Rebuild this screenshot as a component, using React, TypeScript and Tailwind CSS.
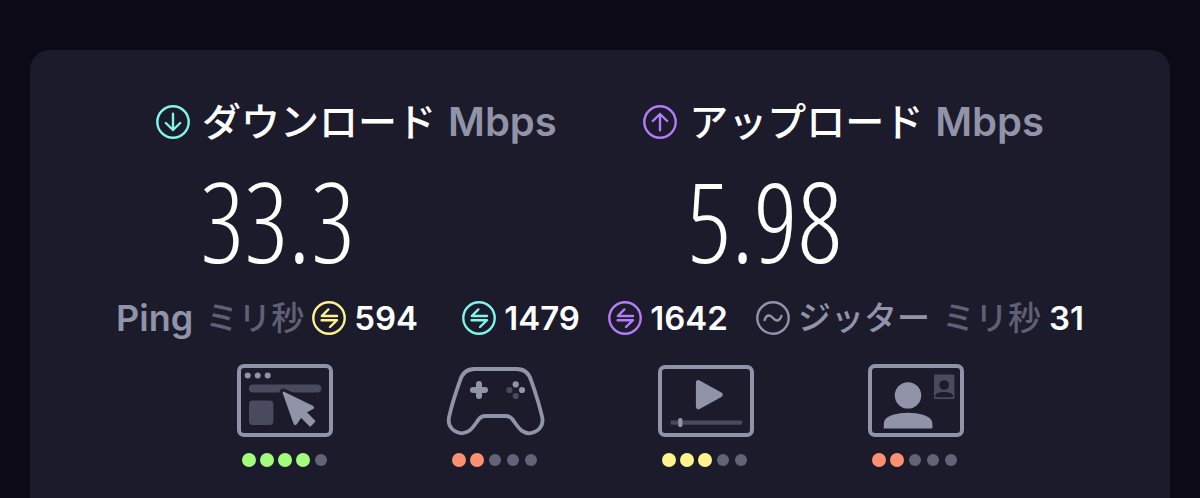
import { ReactNode } from "react";

const circleColors = {
  teal: "text-[#80f5ea]",
  purple: "text-[#b57cfa]",
  yellow: "text-[#fff38e]",
  gray: "text-[#9193a8]",
};

type CircleColor = keyof typeof circleColors;

function CircleIcon({ color, children }: { color: CircleColor; children: ReactNode }) {
  return (
    <svg
      viewBox="0 0 34 34"
      fill="none"
      stroke="currentColor"
      strokeWidth="2.4"
      strokeLinecap="round"
      strokeLinejoin="round"
      aria-hidden="true"
      className={`size-[34px] shrink-0 ${circleColors[color]}`}>
      <circle cx="17" cy="17" r="15.7" />
      {children}
    </svg>
  );
}

const swapPath = <path d="M16.4 8.4 L9.8 15 H25 M9.6 19.2 H25 L18 26" />;

function Speed({
  label,
  value,
  color,
  arrow,
}: {
  label: string;
  value: string;
  color: CircleColor;
  arrow: string;
}) {
  return (
    <section>
      <h2 className="flex items-center text-[39px] leading-10 font-medium text-white">
        <CircleIcon color={color}>
          <path d={arrow} />
        </CircleIcon>
        <span className="ml-3">{label}</span>
        <span className="ml-3 text-[40px] font-semibold text-[#9193a8]">Mbps</span>
      </h2>
      <p className="ml-11 mt-4 font-['Open_Sans_Condensed_Light','Roboto_Condensed','Roboto',sans-serif] text-[110px] leading-[124px] font-thin text-white">
        {value}
      </p>
    </section>
  );
}

function Ping({ value, color }: { value: string; color: CircleColor }) {
  return (
    <span className="flex items-center gap-2">
      <CircleIcon color={color}>{swapPath}</CircleIcon>
      <span className="font-semibold text-white">{value}</span>
    </span>
  );
}

function Art({ label, children }: { label: string; children: ReactNode }) {
  return (
    <svg viewBox="0 0 100 77" role="img" aria-label={label} className="h-[77px] w-[100px]">
      {children}
    </svg>
  );
}

const main = "#9193a8";
const dim = "#494a5d";
const card = "#1b1b2c";

function BrowserArt() {
  return (
    <Art label="Web">
      <rect x="4" y="4" width="92" height="69" rx="5" fill="none" stroke={main} strokeWidth="4" />
      <circle cx="12.7" cy="13.6" r="3" fill={main} />
      <circle cx="22.7" cy="13.6" r="3" fill={main} />
      <circle cx="32.7" cy="13.6" r="3" fill={main} />
      <rect x="14" y="22.4" width="72.4" height="8.2" rx="4" fill={dim} />
      <rect x="14" y="38.6" width="24.4" height="24.4" rx="4" fill={dim} />
      <path
        d="M48.6 30.6 L78 45 L69.8 49.6 L79.3 59.2 L75.2 63.6 L65.8 54 L60.2 62 Z"
        fill={card}
        stroke={card}
        strokeWidth="8"
        strokeLinejoin="round"
      />
      <path
        d="M48.6 30.6 L77.4 44.6 Q78.6 45.6 77.2 46.4 L70.2 50 L79.3 59.2 L75.2 63.6 L66 54.2 L61.2 61.4 Q60.2 62.6 59.4 61.2 Z"
        fill={main}
        stroke={main}
        strokeWidth="2"
        strokeLinejoin="round"
      />
    </Art>
  );
}

function GamepadArt() {
  return (
    <Art label="Gaming">
      <path
        d="M29.6 7 H71.6 C79.6 7 84 11.2 86.2 18.6 C90.6 31 94.2 42 97 54.4 C100 67 87 75.4 77 68.8 C73.2 66.2 70.6 61.4 67.2 57 C65.4 54.8 63.6 54 61 54 H40.2 C37.6 54 35.8 54.8 34 57 C30.6 61.4 28 66.2 24.2 68.8 C14.2 75.4 1.2 67 4.2 54.4 C7 42 10.6 31 15 18.6 C17.2 11.2 21.6 7 29.6 7 Z"
        fill="none"
        stroke={main}
        strokeWidth="3.8"
        strokeLinejoin="round"
      />
      <path d="M34 22 V34 M28 28 H40" stroke={main} strokeWidth="6" strokeLinecap="round" />
      <circle cx="70.7" cy="22.4" r="3.1" fill={main} />
      <circle cx="77" cy="28" r="3.1" fill={main} />
      <circle cx="64.4" cy="28" r="3.1" fill={dim} />
      <circle cx="70.7" cy="34" r="3.1" fill={dim} />
    </Art>
  );
}

function VideoArt() {
  return (
    <Art label="Video">
      <rect x="5" y="5" width="92" height="68" rx="5" fill="none" stroke={main} strokeWidth="4" />
      <path
        d="M43.4 20.6 L65.2 32.7 L43.4 44.8 Z"
        fill={main}
        stroke={main}
        strokeWidth="5"
        strokeLinejoin="round"
      />
      <rect x="15.6" y="58.6" width="71.4" height="4.2" rx="1" fill={dim} />
      <rect x="23.2" y="56" width="4.2" height="9" rx="1.6" fill={main} />
    </Art>
  );
}

function CallArt() {
  return (
    <Art label="Video call">
      <rect x="5" y="4" width="92" height="69" rx="5" fill="none" stroke={main} strokeWidth="4" />
      <circle cx="43" cy="33.4" r="13.2" fill={main} />
      <path
        d="M18.8 66.4 V62 C18.8 57 23 54.4 28 52.8 C37 50 49 50 58 52.8 C63 54.4 67.4 57 67.4 62 V66.4 Z"
        fill={main}
      />
      <rect x="69" y="12.4" width="20.4" height="24.6" rx="1" fill={dim} />
      <circle cx="79.2" cy="23" r="4.8" fill={card} />
      <path d="M70.4 35.2 V33.4 C71.4 31 75 30 79.2 30 C83.4 30 87 31 88 33.4 V35.2 Z" fill={card} />
    </Art>
  );
}

const ratings = [
  { name: "web", art: <BrowserArt />, score: 4, on: "bg-[#a3fb7c]" },
  { name: "gaming", art: <GamepadArt />, score: 2, on: "bg-[#fb9070]" },
  { name: "video", art: <VideoArt />, score: 3, on: "bg-[#fff38e]" },
  { name: "call", art: <CallArt />, score: 2, on: "bg-[#fb9070]" },
];

function Dots({ score, on }: { score: number; on: string }) {
  return (
    <div className="flex">
      {[0, 1, 2, 3, 4].map(i => (
        <span key={i} className="flex size-[18px] items-center justify-center">
          <span className={`rounded-full ${i < score ? `size-3.5 ${on}` : "size-3 bg-[#626377]"}`} />
        </span>
      ))}
    </div>
  );
}

export default function App() {
  return (
    <main
      lang="ja"
      className="flex min-h-screen flex-col bg-[#0b0a16] px-[30px] pt-[50px] font-['Inter','Noto_Sans_CJK_JP',sans-serif]">
      <div className="flex-1 rounded-t-[20px] bg-[#1b1b2c] pt-[52px]">
        <div className="flex justify-between px-[126px]">
          <Speed
            label="ダウンロード"
            value="33.3"
            color="teal"
            arrow="M17 8.8 V25 M9.8 18 L17 25 L24.2 18"
          />
          <Speed
            label="アップロード"
            value="5.98"
            color="purple"
            arrow="M17 25.2 V9 M9.8 16 L17 9 L24.2 16"
          />
        </div>

        <div className="mt-4 flex items-center justify-between px-[86px] text-[33px] leading-10 font-medium">
          <div className="mr-4 flex items-center gap-2">
            <span className="mr-1 text-[36px] font-semibold text-[#9193a8]">Ping</span>
            <span className="text-[#5f6074]">ミリ秒</span>
            <Ping value="594" color="yellow" />
          </div>
          <Ping value="1479" color="teal" />
          <Ping value="1642" color="purple" />
          <div className="flex items-center gap-2">
            <CircleIcon color="gray">
              <path d="M8.6 19 C10.4 13.4 14 13.4 17 17 C20 20.6 23.6 20.6 25.4 15" />
            </CircleIcon>
            <span className="text-[#9193a8]">ジッター</span>
            <span className="ml-1 text-[#5f6074]">ミリ秒</span>
            <span className="font-semibold text-white">31</span>
          </div>
        </div>

        <div className="mt-6 flex justify-between px-[205px]">
          {ratings.map(r => (
            <div key={r.name} className="flex flex-col items-center gap-3">
              {r.art}
              <Dots score={r.score} on={r.on} />
            </div>
          ))}
        </div>
      </div>
    </main>
  );
}
